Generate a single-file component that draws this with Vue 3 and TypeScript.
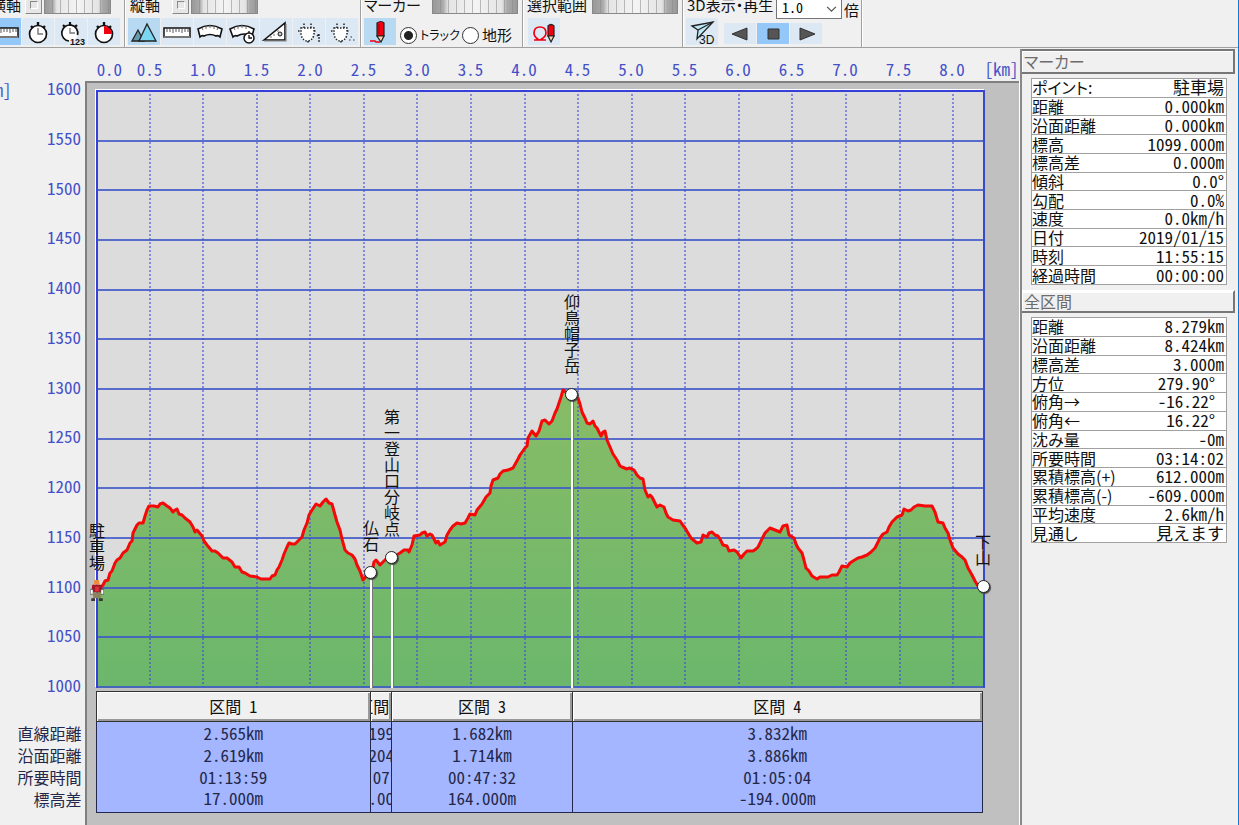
<script setup lang="ts">
import { ref } from 'vue'

interface Row { label: string; value: string; pad?: boolean }
interface Pin { name: string; x: number; y: number; kind: 'dot' | 'hiker' }
interface Segment { name: string; km: number; cells: string[] }

const LEFT = 96
const TOP = 90
const WIDTH = 887
const HEIGHT = 598
const TOTAL_KM = 8.279

const mode = ref('track')
const speed = ref('1.0')

const kmTicks = Array.from({ length: 17 }, (_, i) => (i / 2).toFixed(1))
const heights = Array.from({ length: 13 }, (_, i) => 1600 - i * 50)
const tickWidth = (i: number) => `${(((i ? 0.5 : 0.25) / TOTAL_KM) * 100).toFixed(3)}%`
const gridX = kmTicks.slice(1).map((t) => LEFT + Math.round((Number(t) / TOTAL_KM) * WIDTH))
const gridY = heights.map((_, i) => TOP + 1 + Math.round((i * (HEIGHT - 2)) / 12))

const track =
  '98,590 103,585 105,581 108,580 110,573 112,571 115,563 117,560 120,558 123,553 127,550 130,543 132,541 133,533 137,525 139,523 143,523 145,516 147,510 149,506 154,506 158,507 160,504 163,503 167,506 170,508 173,512 175,510 177,509 179,514 182,515 185,518 190,522 193,527 195,532 197,530 202,536 204,541 207,545 212,551 215,551 218,553 223,558 227,558 232,562 235,567 239,567 242,572 245,573 250,576 257,577 261,579 265,579 270,579 272,576 275,575 277,570 279,567 282,560 284,554 287,547 289,543 292,544 295,544 297,542 302,537 304,530 307,523 309,515 312,510 316,504 320,506 323,502 326,499 329,503 332,504 335,515 337,522 340,530 342,539 345,550 348,553 352,555 355,559 357,565 360,571 363,580 368,574 372,572 374,562 376,560 380,565 383,562 387,558 393,557 400,553 404,550 408,550 409,552 412,545 414,536 420,535 422,533 425,532 427,536 430,534 432,535 436,543 438,541 440,545 445,542 447,535 450,530 453,526 457,523 461,524 465,523 468,518 470,514 475,515 477,510 482,504 486,497 490,493 491,486 493,480 498,478 500,474 503,471 508,470 513,468 518,459 520,455 525,448 527,446 528,438 532,431 536,436 539,431 542,421 545,420 549,424 552,421 555,413 557,409 559,403 561,397 563,390 567,393 572,394 578,398 580,404 582,412 585,418 587,423 590,424 593,421 595,426 597,428 601,436 603,432 605,431 607,440 610,447 613,454 617,460 620,466 622,467 627,469 629,468 632,469 634,470 637,475 640,478 643,479 645,490 648,497 650,495 652,497 654,501 657,507 660,505 664,507 666,513 668,517 673,520 680,521 682,524 685,528 688,533 691,538 697,543 701,542 703,535 707,537 709,533 712,532 715,535 718,536 720,539 723,545 727,546 729,551 734,550 737,552 741,558 744,554 747,551 753,551 756,549 758,547 761,541 765,533 770,528 775,530 780,532 783,526 787,525 789,535 794,538 796,544 798,548 802,553 804,560 806,568 809,571 812,576 817,579 820,577 823,577 828,577 832,575 837,575 839,572 842,566 847,567 850,563 853,561 858,558 862,557 867,555 871,552 875,548 877,544 880,538 883,534 887,532 889,527 892,522 897,517 902,515 904,509 908,511 911,510 914,507 918,505 925,506 932,506 935,512 938,522 943,523 945,528 948,533 950,540 953,548 958,554 962,557 965,560 968,568 972,575 975,581 978,586 983,586'
const area = `96,688 96,590 ${track} 983,688`

const pins: Pin[] = [
  { name: '駐車場', x: 97, y: 590, kind: 'hiker' },
  { name: '仏石', x: 371, y: 572, kind: 'dot' },
  { name: '第一登山口分岐点', x: 392, y: 557, kind: 'dot' },
  { name: '仰鳥帽子岳', x: 572, y: 394, kind: 'dot' },
  { name: '下山', x: 983, y: 586, kind: 'dot' },
]
const stems = pins.slice(1, 4)
const pinPlace = (p: Pin) => ({
  left: `${(((p.x - LEFT) / WIDTH) * 100).toFixed(2)}%`,
  bottom: `${(((TOP + HEIGHT - p.y) / HEIGHT) * 100).toFixed(2)}%`,
})

const rowNames = ['直線距離', '沿面距離', '所要時間', '標高差']
const segments: Segment[] = [
  { name: '区間 1', km: 2.565, cells: ['2.565km', '2.619km', '01:13:59', '17.000m'] },
  { name: '区間 2', km: 0.199, cells: ['0.199km', '0.204km', '00:07:27', '16.000m'] },
  { name: '区間 3', km: 1.682, cells: ['1.682km', '1.714km', '00:47:32', '164.000m'] },
  { name: '区間 4', km: 3.832, cells: ['3.832km', '3.886km', '01:05:04', '-194.000m'] },
]

const panels: { title: string; rows: Row[] }[] = [
  {
    title: 'マーカー',
    rows: [
      { label: 'ポイント:', value: '駐車場' },
      { label: '距離', value: '0.000km' },
      { label: '沿面距離', value: '0.000km' },
      { label: '標高', value: '1099.000m' },
      { label: '標高差', value: '0.000m' },
      { label: '傾斜', value: '0.0°' },
      { label: '勾配', value: '0.0%' },
      { label: '速度', value: '0.0km/h' },
      { label: '日付', value: '2019/01/15' },
      { label: '時刻', value: '11:55:15' },
      { label: '経過時間', value: '00:00:00' },
    ],
  },
  {
    title: '全区間',
    rows: [
      { label: '距離', value: '8.279km' },
      { label: '沿面距離', value: '8.424km' },
      { label: '標高差', value: '3.000m' },
      { label: '方位', value: '279.90°', pad: true },
      { label: '俯角→', value: '-16.22°', pad: true },
      { label: '俯角←', value: '16.22°', pad: true },
      { label: '沈み量', value: '-0m' },
      { label: '所要時間', value: '03:14:02' },
      { label: '累積標高(+)', value: '612.000m' },
      { label: '累積標高(-)', value: '-609.000m' },
      { label: '平均速度', value: '2.6km/h' },
      { label: '見通し', value: '見えます' },
    ],
  },
]
</script>

<template>
  <div class="page">
    <header class="toolbar">
      <section class="group g-x">
        <div class="top">
          <span class="cap">横軸</span>
          <button class="mini" aria-label="横軸の固定"></button>
          <span class="grip"></span>
        </div>
        <div class="tools">
          <button class="tool pressed" aria-label="距離">
            <svg viewBox="0 0 32 26"><path d="M3 9h26v9H3z" fill="#fff" stroke="#111" stroke-width="1.5" /><path d="M3 18h26" stroke="#777" stroke-width="2" /><path d="M6 10v3m3-3v3m3-3v4m3-4v3m3-3v3m3-3v4m3-4v3m3-3v3" stroke="#555" /></svg>
          </button>
          <button class="tool" aria-label="時間">
            <svg viewBox="0 0 32 26"><circle cx="16" cy="15" r="8.5" fill="#fff" stroke="#111" stroke-width="1.7" /><path d="M16 3v4M9 7l2 2m12-2-2 2" stroke="#111" stroke-width="2.4" /><path d="M16 9v6h5" fill="none" stroke="#777" stroke-width="1.4" /></svg>
          </button>
          <button class="tool" aria-label="時刻">
            <svg viewBox="0 0 32 26"><circle cx="15" cy="14" r="8" fill="#fff" /><path d="M14 22a8 8 0 1 1 8.500-6" fill="none" stroke="#111" stroke-width="1.700" /><path d="M15 3v4M8 6l2 2m12-2-2 2" stroke="#111" stroke-width="2.2" /><path d="M15 9v5h5" fill="none" stroke="#777" stroke-width="1.3" /><text x="15" y="26" font-size="9" font-weight="bold" fill="#111">123</text></svg>
          </button>
          <button class="tool" aria-label="経過時間">
            <svg viewBox="0 0 32 26"><circle cx="16" cy="15" r="8.5" fill="#fff" stroke="#111" stroke-width="1.7" /><path d="M16 7a8 8 0 0 1 8 8h-8z" fill="#f00010" /><path d="M16 3v4M9 7l2 2m12-2-2 2" stroke="#111" stroke-width="2.4" /></svg>
          </button>
        </div>
      </section>

      <section class="group g-y">
        <div class="top">
          <span class="cap">縦軸</span>
          <button class="mini" aria-label="縦軸の固定"></button>
          <span class="grip"></span>
        </div>
        <div class="tools">
          <button class="tool on" aria-label="標高">
            <svg viewBox="0 0 32 26"><path d="m4 22 6-11 6 11z" fill="#6699aa" stroke="#222" stroke-width="1.3" /><path d="m11 22 8-17 9 17z" fill="#7cd6f2" stroke="#222" stroke-width="1.3" /></svg>
          </button>
          <button class="tool" aria-label="距離">
            <svg viewBox="0 0 32 26"><path d="M3 9h26v9H3z" fill="#fff" stroke="#111" stroke-width="1.5" /><path d="M3 18h26" stroke="#777" stroke-width="2" /><path d="M6 10v3m3-3v3m3-3v4m3-4v3m3-3v3m3-3v4m3-4v3m3-3v3" stroke="#555" /></svg>
          </button>
          <button class="tool" aria-label="速度">
            <svg viewBox="0 0 32 26"><path d="M4 10q12-7 24 0l-2 8q-2-2-4-1-6-3-12 0-2-1-4 1z" fill="#fff" stroke="#111" stroke-width="1.6" /><path d="m8 9 1 2m3-4v3m4-4v3m4-2v3m4-1-1 2" stroke="#666" /></svg>
          </button>
          <button class="tool" aria-label="平均速度">
            <svg viewBox="0 0 32 26"><path d="M3 10q12-7 24 0l-2 7q-8-4-15 0-2-1-4 1z" fill="#fff" stroke="#111" stroke-width="1.6" /><path d="m7 9 1 2m3-4v3m4-4v3m4-2v3" stroke="#666" /><circle cx="22" cy="19" r="5" fill="#fff" stroke="#111" stroke-width="1.5" /><path d="M22 12v2m0 2v3h3" fill="none" stroke="#111" stroke-width="1.3" /></svg>
          </button>
          <button class="tool" aria-label="傾斜">
            <svg viewBox="0 0 32 26"><path d="M4 21 25 4v17z" fill="#fff" stroke="#111" stroke-width="1.6" /><path d="M4 22h22V5" fill="none" stroke="#888" stroke-width="1.2" /><circle cx="20" cy="15" r="2" fill="#ccc" stroke="#111" /><path d="M11 17v2m3-4v2m4-6v2" stroke="#777" /></svg>
          </button>
          <button class="tool" aria-label="センサー1">
            <svg viewBox="0 0 32 26"><path d="M8 9h13v7q-2 6-6.500 6T8 16zM11 9V4m7 5V4M5 12h3m13 0h3m-9 10v3" fill="#fff" stroke="#222" stroke-width="1.500" stroke-dasharray="1.500 1.500" /><path d="M26 15v8m-2-6 2-2" stroke="#222" stroke-width="1.300" stroke-dasharray="2 1" /></svg>
          </button>
          <button class="tool" aria-label="センサー2">
            <svg viewBox="0 0 32 26"><path d="M8 9h13v7q-2 6-6.500 6T8 16zM11 9V4m7 5V4M5 12h3m13 0h3m-9 10v3" fill="#fff" stroke="#222" stroke-width="1.500" stroke-dasharray="1.500 1.500" /><path d="M23 21h1.500m0-3H26m1 3h1.500" stroke="#333" stroke-width="1.200" /></svg>
          </button>
        </div>
      </section>

      <section class="group g-marker">
        <div class="top">
          <span class="cap kana">マーカー</span>
          <span class="grip wide"></span>
        </div>
        <div class="tools">
          <button class="tool on" aria-label="マーカー編集">
            <svg viewBox="0 0 32 26"><path d="M13 4q4-3 7 0v13H13z" fill="#f00010" stroke="#222" stroke-width="1.2" /><path d="M13 17h7l-3 6z" fill="#fbd9a8" stroke="#222" stroke-width="1.2" /><path d="M15 5v10" stroke="#900" /><path d="M6 22h5l1 1h4" fill="none" stroke="#f00010" stroke-width="1.6" /></svg>
          </button>
          <label class="radio small"><input v-model="mode" type="radio" name="mode" value="track" /><span class="kana">トラック</span></label>
          <label class="radio"><input v-model="mode" type="radio" name="mode" value="terrain" /><span>地形</span></label>
        </div>
      </section>

      <section class="group g-range">
        <div class="top">
          <span class="cap">選択範囲</span>
          <span class="grip wide"></span>
        </div>
        <div class="tools">
          <button class="tool" aria-label="範囲選択">
            <svg viewBox="0 0 32 26"><path d="M6 21h5q-5-3-5-7 0-6 6-6t6 6q0 4-6 7h6" fill="none" stroke="#f00010" stroke-width="1.700" /><path d="M20 7q3-3 6 0v10h-6z" fill="#f00010" stroke="#222" stroke-width="1.200" /><path d="M20 17h6l-3 6z" fill="#fbd9a8" stroke="#222" stroke-width="1.200" /></svg>
          </button>
        </div>
      </section>

      <section class="group g-play">
        <div class="top">
          <label class="cap kana" for="speed">3D表示・再生</label>
          <span class="select">
            <select id="speed" v-model="speed"><option>1.0</option><option>2.0</option></select>
            <svg viewBox="0 0 12 8"><path d="m1 1 5 5 5-5" fill="none" stroke="#555" stroke-width="1.4" /></svg>
          </span>
          <span class="times">倍</span>
        </div>
        <div class="tools">
          <button class="tool" aria-label="3D表示">
            <svg viewBox="0 0 32 26"><path d="M6 7 27 3 11 20l1-9z" fill="#bdeaf8" stroke="#222" stroke-width="1.3" /><path d="M27 3 12 11" stroke="#222" stroke-width="1.2" /><text x="13" y="25" font-size="12" fill="#111">3D</text></svg>
          </button>
          <span class="transport">
            <button class="key" aria-label="逆再生"><svg viewBox="0 0 32 21"><path d="m8 11 15-6v12z" fill="#555" stroke="#333" /></svg></button>
            <button class="key pressed" aria-label="停止"><svg viewBox="0 0 32 21"><path d="M11 6h11v10H11z" fill="#555" stroke="#333" /></svg></button>
            <button class="key" aria-label="再生"><svg viewBox="0 0 32 21"><path d="M10 5v12l15-6z" fill="#555" stroke="#333" /></svg></button>
          </span>
        </div>
      </section>
    </header>

    <div class="main">
      <main class="profile">
        <div class="x-axis">
          <div class="ticks">
            <span v-for="(t, i) in kmTicks" :key="t" :style="{ width: tickWidth(i) }">{{ t }}</span>
          </div>
          <span class="unit-x">[km]</span>
        </div>

        <div class="body">
          <div class="plot-row">
            <div class="y-axis">
              <span class="unit-y">[m]</span>
              <div class="levels"><span v-for="h in heights" :key="h">{{ h }}</span></div>
            </div>
            <div class="plot">
              <svg class="canvas" viewBox="96 90 887 598" preserveAspectRatio="none">
                <defs>
                  <linearGradient id="land" gradientUnits="userSpaceOnUse" x1="0" y1="390" x2="0" y2="688">
                    <stop offset="0" stop-color="#88bc66" /><stop offset="1" stop-color="#6bb76c" />
                  </linearGradient>
                </defs>
                <polygon :points="area" fill="url(#land)" />
                <g class="grid">
                  <line v-for="x in gridX" :key="x" class="dotted" :x1="x" :x2="x" y1="90" y2="688" />
                  <line v-for="y in gridY" :key="y" x1="96" x2="983" :y1="y" :y2="y" />
                  <line class="edge" x1="96" x2="983" y1="91" y2="91" />
                  <line class="edge" x1="97" x2="97" y1="90" y2="688" />
                </g>
                <polyline :points="track" class="track" />
                <g class="stems">
                  <template v-for="s in stems" :key="s.name">
                    <line class="shade" :x1="s.x + 1" :x2="s.x + 1" :y1="s.y" y2="688" />
                    <line :x1="s.x" :x2="s.x" :y1="s.y" y2="688" />
                  </template>
                </g>
              </svg>
              <div v-for="p in pins" :key="p.name" class="pin" :style="pinPlace(p)">
                <span class="pin-name">{{ p.name }}</span>
                <i v-if="p.kind === 'dot'" class="dot"></i>
                <svg v-else class="hiker" viewBox="0 0 14 24">
                  <path d="M4 1h5l1 5H4z" fill="#f08a3c" /><path d="M4 6h6v3H4z" fill="#ffe0b8" />
                  <path d="M2 6h10l1 8H1z" fill="#a01828" /><path d="M5 8h4v5H5z" fill="#e03038" />
                  <path d="M0 11h3v5H0zm11 0h3v5h-3z" fill="#fff" stroke="#333" stroke-width=".6" />
                  <path d="M3 14h8v6H3z" fill="#8a8458" /><path d="M1 20h4v3H1zm8 0h4v3H9z" fill="#3c3430" />
                </svg>
              </div>
            </div>
          </div>

          <table class="segments">
            <colgroup>
              <col class="names" />
              <col v-for="s in segments" :key="s.name" :style="{ width: `${((s.km / TOTAL_KM) * 100).toFixed(2)}%` }" />
            </colgroup>
            <thead>
              <tr><td></td><th v-for="s in segments" :key="s.name" scope="col"><span>{{ s.name }}</span></th></tr>
            </thead>
            <tbody>
              <tr v-for="(n, r) in rowNames" :key="n">
                <th scope="row">{{ n }}</th>
                <td v-for="s in segments" :key="s.name"><span>{{ s.cells[r] }}</span></td>
              </tr>
            </tbody>
          </table>
        </div>
      </main>

      <aside class="side">
        <section v-for="p in panels" :key="p.title">
          <h2>{{ p.title }}</h2>
          <table class="info">
            <tbody>
              <tr v-for="r in p.rows" :key="r.label">
                <th scope="row">{{ r.label }}</th>
                <td :class="{ pad: r.pad }">{{ r.value }}</td>
              </tr>
            </tbody>
          </table>
        </section>
      </aside>
    </div>
  </div>
</template>

<style>
body { margin: 0; background: #f0f0f0; }
</style>

<style scoped>
* { box-sizing: border-box; }
.page {
  display: flex;
  flex-direction: column;
  min-height: 100vh;
  overflow: hidden;
  border-right: 1px solid #0a7ad8;
  background: #f0f0f0;
  color: #111;
  font: 16px/18px "Noto Sans Mono CJK JP", "Noto Sans CJK JP", sans-serif;
}
button { padding: 0; border: 0; font: inherit; }
svg { display: block; }
svg text { font-family: "Liberation Sans", sans-serif; }

.toolbar { display: flex; height: 48px; margin-left: -12px; border-bottom: 1px solid #a0a0a0; }
.group {
  flex: none;
  border-right: 1px solid #a0a0a0;
  box-shadow: 1px 0 #fff;
  margin-right: 2px;
}
.g-x { width: 137px; }
.g-y { width: 234px; }
.g-marker { width: 160px; }
.g-range { width: 158px; }
.g-play { width: 177px; }
.top { display: flex; align-items: flex-end; height: 14px; padding-left: 3px; font-size: 15px; white-space: nowrap; }
.cap { width: 42px; }
.g-x .cap { width: 34px; }
.g-marker .top { padding-left: 1px; }
.g-range .top, .g-play .top { padding-left: 2px; }
.g-marker .cap { width: 66px; }
.g-range .cap { width: 63px; }
.g-play .cap { width: 89px; }
.kana, .info th { font-family: "Noto Sans CJK JP", sans-serif; font-feature-settings: "palt"; }
.mini { width: 17px; height: 20px; border: 1px solid #aaa; border-color: #fff #888 #888 #fff; background: #e6e6e6; }
.mini::after { content: ""; display: block; width: 6px; height: 6px; margin: 1px auto 0; border: 1px solid #999; border-color: #888 #fff #fff #888; }
.grip {
  width: 67px;
  height: 20px;
  margin-left: 2px;
  border: 1px solid #888;
  background:
    repeating-linear-gradient(90deg, transparent 0 7px, #8888 7px 8px),
    linear-gradient(90deg, #999, #aaa 12%, #e4e4e4 18%, #f4f4f4 50%, #e4e4e4 82%, #aaa 88%, #999);
}
.grip.wide { width: 86px; }
.tools { display: flex; align-items: flex-start; gap: 1px; padding: 4px 0 0 1px; }
.g-range .tools { padding-left: 3px; }
.tool { width: 32px; height: 27px; background: #dce9f4; }
.tool svg { width: 32px; height: 26px; }
.on { background: #b8d9f2; }
.pressed { background: #94c8f8; }
.radio { display: flex; align-items: center; gap: 3px; height: 34px; margin-left: 3px; font-size: 15px; white-space: nowrap; }
.radio.small { width: 58px; font-size: 12px; }
.radio input {
  flex: none;
  appearance: none;
  width: 17px;
  height: 17px;
  margin: 0;
  border: 1px solid #333;
  border-radius: 50%;
  background: #fff;
}
.radio input:checked { background: radial-gradient(circle, #222 0 4px, #fff 5px); }
.select { position: relative; width: 66px; height: 24px; margin-right: 2px; }
.g-play .top { align-items: center; }
.g-play .cap { align-self: flex-end; }
.times { padding-top: 5px; }
.select select {
  appearance: none;
  width: 66px;
  height: 24px;
  padding: 0 5px;
  border: 1px solid #777;
  border-radius: 0;
  background: #fff;
  font: 14px/22px "Noto Sans Mono CJK JP", "Noto Sans CJK JP", sans-serif;
}
.select svg { position: absolute; right: 5px; top: 11px; width: 11px; height: 7px; pointer-events: none; }
.transport { display: flex; gap: 1px; padding: 5px 0 0 5px; }
.key { width: 32px; height: 21px; background: #dce9f4; }
.key svg { width: 32px; height: 21px; }
.key.pressed { background: #94c8f8; }

.main { display: flex; flex: 1; }
.profile { display: flex; flex: 1; flex-direction: column; min-width: 0; }
.x-axis { display: flex; align-items: center; height: 33px; padding: 8px 0 0 96px; color: #4450c8; font-size: 17px; }
.ticks { display: flex; flex: 1; margin-right: 1px; }
.ticks span { flex: none; text-align: center; }
.unit-x { width: 37px; text-align: center; }
.body {
  display: flex;
  flex: 1;
  flex-direction: column;
  padding: 9px 35px 12px 0;
  background:
    linear-gradient(#f0f0f0, #f0f0f0) 0 0 / 85px 100% no-repeat,
    linear-gradient(#fff, #fff) 100% 0 / 1px 100% no-repeat,
    linear-gradient(#808080, #808080) 85px 0 / 2px 100% no-repeat,
    linear-gradient(#808080, #808080) 0 0 / 100% 2px no-repeat,
    #c0c0c0;
}
.plot-row { display: flex; flex: 1; min-height: 400px; }
.y-axis { display: flex; width: 96px; color: #4450c8; justify-content: space-between; font-size: 17px; }
.unit-y { align-self: flex-start; margin: -9px 0 0 -14px; }
.levels { display: flex; flex-direction: column; justify-content: space-between; margin: -11px 15px -6px 0; }
.plot { position: relative; flex: 1; background: #dcdcdc; border-right: 2px solid #3848c8; box-shadow: -1px -1px #fff; }
.canvas { position: absolute; width: 100%; height: 100%; }
.grid line { stroke: #4058c8; stroke-width: 2; stroke-opacity: .85; }
.grid .dotted { stroke: #3c46e0; stroke-dasharray: 2 2; stroke-opacity: .55; }
.grid .edge { stroke: #3440d8; stroke-opacity: 1; }
.track { fill: none; stroke: #f40808; stroke-width: 3; stroke-linejoin: round; }
.stems line { stroke: #fff; stroke-width: 2; shape-rendering: crispEdges; }
.stems .shade { stroke: #777; }
.pin { position: absolute; display: flex; flex-direction: column; align-items: center; width: 20px; margin: 0 0 -10px -10px; }
.pin-name { writing-mode: vertical-rl; line-height: 18px; font-size: 16px; padding-bottom: 14px; }
.dot { width: 13px; height: 13px; margin-bottom: 3px; border: 1px solid #222; border-radius: 50%; background: #fff; box-shadow: 1px 1px 1px #444; }
.hiker { width: 14px; height: 23px; margin: -6px 0 -2px; }

.segments { width: calc(100% - 2px); margin-top: 3px; table-layout: fixed; border-collapse: collapse; text-align: center; }
.segments .names { width: 96px; }
.segments th, .segments td { padding: 0; font-weight: 400; white-space: nowrap; overflow: hidden; }
.segments span { display: flex; justify-content: center; }
.segments thead th { height: 30px; padding-bottom: 2px; border: 1px solid #333; background: #f0f0f0; box-shadow: inset 1px 1px #fff, inset -2px -2px #999; }
.segments tbody tr { height: 22px; color: #23284a; }
.segments tbody td { border: solid #23284a; border-width: 0 1px; background: #a4b6ff; font-size: 17px; }
.segments tbody tr:last-child { height: 25px; }
.segments tbody tr:last-child th { padding-bottom: 3px; }
.segments tbody tr:last-child td { padding-bottom: 3px; border-bottom-width: 1px; }
.segments tbody th { padding-right: 14px; text-align: right; }

.side { flex: none; width: 218px; margin-top: 1px; padding-right: 3px; border-left: 2px solid #888; }
.side h2 {
  height: 25px;
  margin: 0;
  padding: 1px 2px 0;
  border: solid #777;
  border-width: 2px 2px 2px 0;
  box-shadow: inset 1px 1px #fff;
  color: #6c6c6c;
  font: 400 16px/19px "Noto Sans CJK JP", sans-serif;
  font-feature-settings: "palt";
}
.side section + section h2 { height: 23px; padding-top: 0; border-top-color: #fff; }
.info { width: 196px; height: 207px; margin: 4px 0 5px 9px; border-collapse: collapse; background: #fff; line-height: 16px; }
.side section + section .info { height: 226px; }
.info tr { border: 1px solid #a0a0a0; }
.info th, .info td { padding: 0 2px 1px; font-weight: 400; white-space: nowrap; }
.info th { padding-left: 0; text-align: left; }
.info td { text-align: right; font-size: 17px; }
.info .pad { padding-right: 11px; }
</style>
